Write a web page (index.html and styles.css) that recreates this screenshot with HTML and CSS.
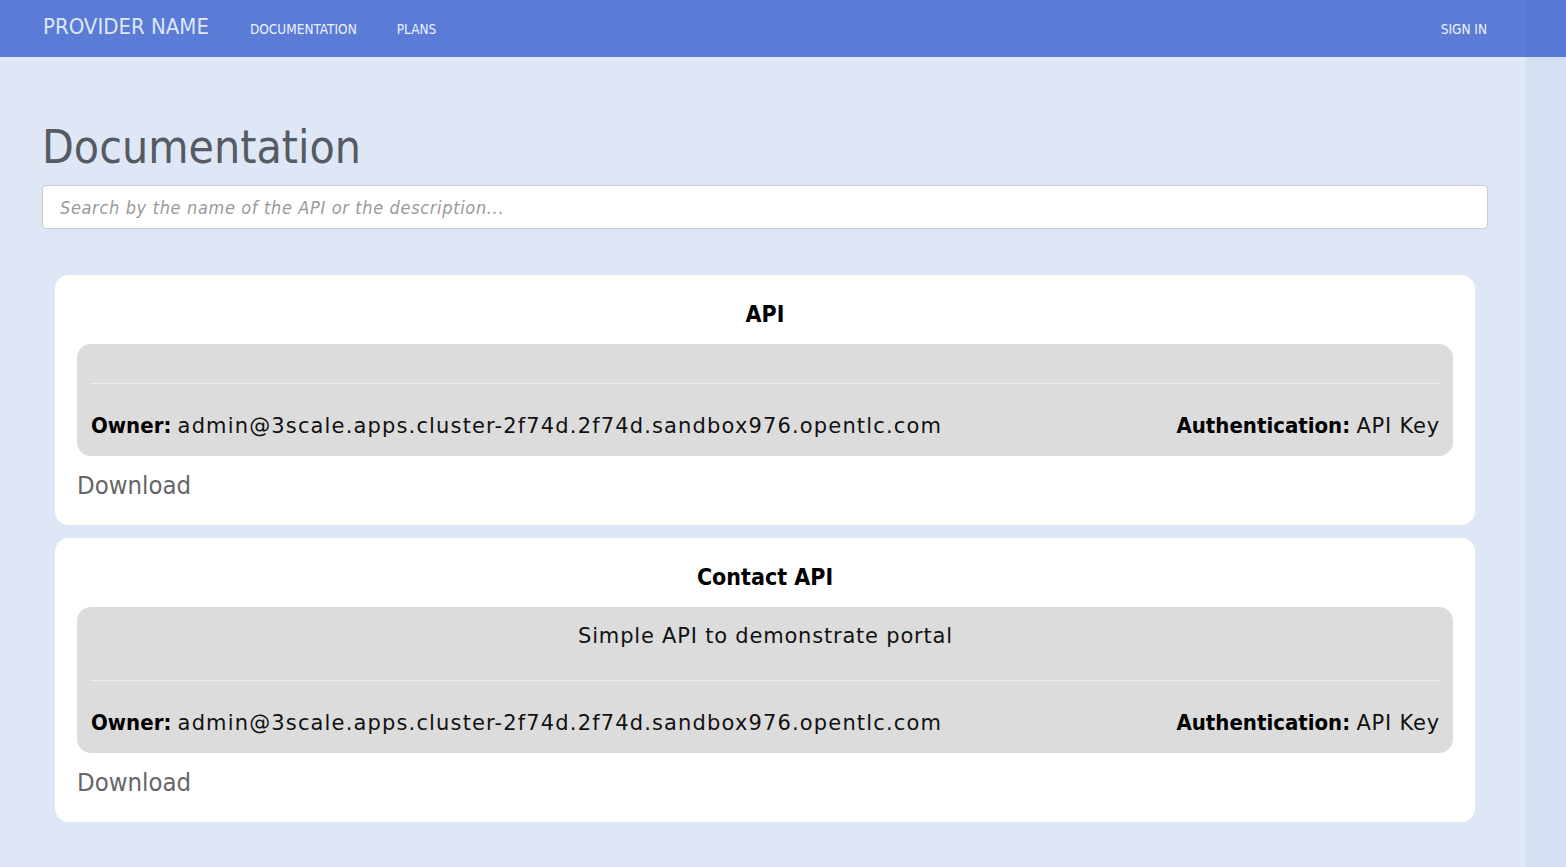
FILE: index.html
```html
<!DOCTYPE html>
<html lang="en">
<head>
<meta charset="utf-8">
<title>Documentation</title>
<link rel="stylesheet" href="styles.css">
</head>
<body>
<div class="page">
  <header class="topbar">
    <a class="brand" href="#">PROVIDER NAME</a>
    <nav class="nav">
      <a href="#">DOCUMENTATION</a>
      <a href="#">PLANS</a>
    </nav>
    <a class="signin" href="#">SIGN IN</a>
  </header>
  <main class="main">
    <h1 class="title">Documentation</h1>
    <input class="search" type="text" placeholder="Search by the name of the API or the description...">
    <div class="cards">
      <section class="card">
        <h2 class="card-title">API</h2>
        <div class="info">
          <div class="desc"></div>
          <hr class="sep">
          <div class="meta">
            <span><b>Owner:</b> <span class="val">admin@3scale.apps.cluster-2f74d.2f74d.sandbox976.opentlc.com</span></span>
            <span><b>Authentication:</b> <span class="val">API Key</span></span>
          </div>
        </div>
        <a class="download" href="#">Download</a>
      </section>
      <section class="card">
        <h2 class="card-title">Contact API</h2>
        <div class="info">
          <div class="desc">Simple API to demonstrate portal</div>
          <hr class="sep">
          <div class="meta">
            <span><b>Owner:</b> <span class="val">admin@3scale.apps.cluster-2f74d.2f74d.sandbox976.opentlc.com</span></span>
            <span><b>Authentication:</b> <span class="val">API Key</span></span>
          </div>
        </div>
        <a class="download" href="#">Download</a>
      </section>
    </div>
  </main>
</div>
<div class="edge"></div>
</body>
</html>
```
FILE: styles.css
```css
html, body {
  margin: 0;
  padding: 0;
  height: 100%;
}
body {
  display: flex;
  background: #dfe7f7;
  font-family: "DejaVu Sans Condensed", "DejaVu Sans", sans-serif;
  font-stretch: condensed;
  color: #111;
  overflow: hidden;
}
.page {
  flex: 1;
  min-width: 0;
}
.edge {
  position: fixed;
  top: 0;
  right: 0;
  width: 40px;
  height: 100%;
  background: rgba(40, 70, 160, 0.05);
}
a { text-decoration: none; }
.topbar {
  height: 57px;
  background: #5a7cd6;
  display: flex;
  align-items: center;
  padding: 0 78px 0 43px;
}
.brand {
  color: #dfe6f8;
  font-size: 22px;
  margin-top: -4px;
}
.nav {
  display: flex;
  gap: 40px;
  margin-left: 41px;
  flex: 1;
}
.nav a, .signin {
  color: #eef2fb;
  font-size: 13.5px;
  margin-top: 1px;
}
.signin { margin-right: 1px; }
.main {
  padding: 63px 78px 0 42px;
}
.title {
  margin: 0 0 11px 0;
  font-size: 46px;
  line-height: 54px;
  font-weight: normal;
  color: #555a63;
}
.search {
  display: block;
  box-sizing: border-box;
  width: 100%;
  height: 44px;
  border: 1px solid #c8ccd2;
  border-radius: 4px;
  padding: 0 17px;
  font-family: inherit;
  font-stretch: condensed;
  font-size: 18px;
  font-style: italic;
  letter-spacing: 0.65px;
  background: #fff;
  outline: none;
}
.search::placeholder {
  color: #999;
  font-style: italic;
}
.cards {
  display: flex;
  flex-direction: column;
  gap: 13px;
  margin: 46px 13px 0;
}
.card {
  background: #fff;
  border-radius: 14px;
  padding: 21px 22px 22px;
}
.card-title {
  margin: 0 0 15px;
  text-align: center;
  font-size: 23px;
  line-height: 33px;
  color: #000;
  position: relative;
  top: 2px;
}
.info {
  background: #dcdcdc;
  border-radius: 14px;
  padding: 12px 13px 14px 14px;
  font-size: 22px;
}
.desc {
  text-align: center;
  line-height: 34px;
  height: 34px;
  margin-bottom: 27px;
  font-family: "DejaVu Sans", sans-serif;
  font-stretch: normal;
  font-size: 21px;
  letter-spacing: 0.8px;
}
.desc:empty { height: 0; }
.sep {
  margin: 0 0 25px;
  border: 0;
  border-top: 1px solid #ececec;
}
.meta {
  display: flex;
  justify-content: space-between;
  align-items: baseline;
  height: 33px;
  line-height: 33px;
}
.meta b { color: #000; }
.val {
  font-family: "DejaVu Sans", sans-serif;
  font-stretch: normal;
  font-size: 21px;
  letter-spacing: 1.15px;
}
.meta > span:last-child .val { letter-spacing: 0.8px; }
.download {
  display: inline-block;
  margin: 11px 0 0 0;
  font-size: 25.5px;
  line-height: 36px;
  color: #666;
}
```
